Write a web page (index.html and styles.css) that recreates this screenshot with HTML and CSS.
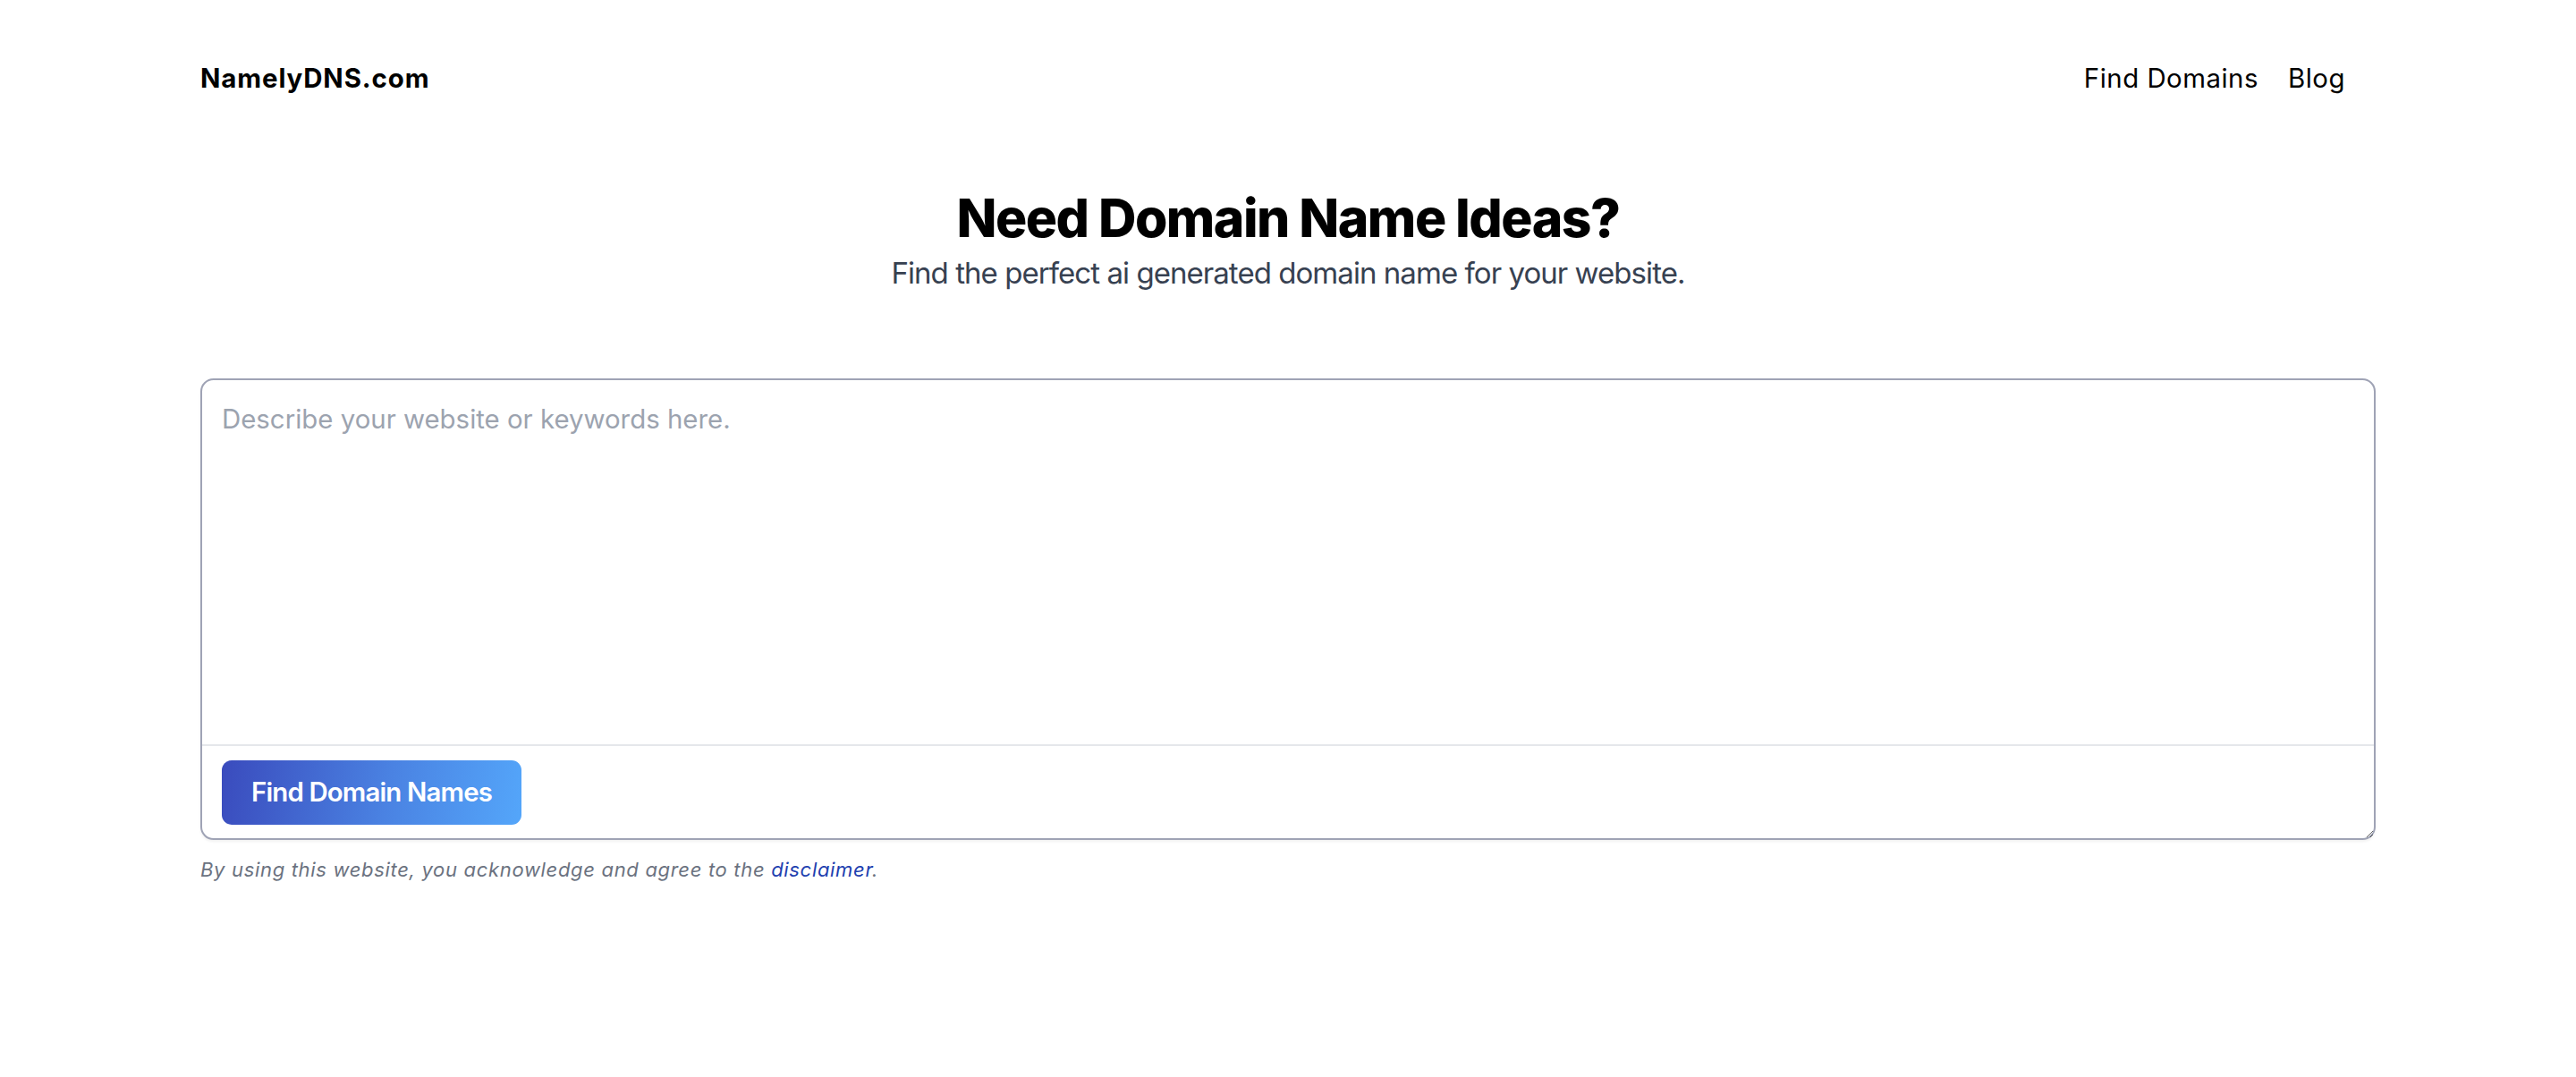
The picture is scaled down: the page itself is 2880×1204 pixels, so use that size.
FILE: index.html
```html
<!DOCTYPE html>
<html lang="en">
<head>
<meta charset="utf-8">
<title>NamelyDNS.com</title>
<link rel="stylesheet" href="styles.css">
</head>
<body>
<div class="page">
  <header class="header">
    <a class="logo" href="#">NamelyDNS.com</a>
    <nav class="nav">
      <a href="#">Find Domains</a>
      <a href="#">Blog</a>
    </nav>
  </header>
  <section class="hero">
    <h1 class="title">Need Domain Name Ideas?</h1>
    <p class="subtitle">Find the perfect ai generated domain name for your website.</p>
  </section>
  <form class="search">
    <div class="box">
      <textarea class="input" placeholder="Describe your website or keywords here."></textarea>
      <div class="box-footer">
        <button type="button" class="btn">Find Domain Names</button>
      </div>
    </div>
    <p class="disclaimer">By using this website, you acknowledge and agree to the <a href="#">disclaimer</a>.</p>
  </form>
</div>
</body>
</html>
```
FILE: styles.css
```css
* { box-sizing: border-box; }
html, body { margin: 0; padding: 0; background: #ffffff; }
body {
  font-family: Inter, "Noto Sans", sans-serif;
  color: #000;
  font-size: 29.4px;
  line-height: 44px;
}
a { color: inherit; text-decoration: none; }
.page { padding: 0 224px; }
.header {
  display: flex;
  justify-content: space-between;
  align-items: center;
  padding-top: 66px;
}
.logo { font-weight: 700; font-size: 29.4px; line-height: 44px; letter-spacing: 0.9px; }
.nav { display: flex; gap: 33px; margin-right: 34px; }
.nav a { font-size: 29.4px; line-height: 44px; font-weight: 400; letter-spacing: 0.5px; }
.hero { text-align: center; margin-top: 99px; }
.title {
  margin: 0;
  font-size: 58.8px;
  line-height: 70.6px;
  font-weight: 800;
  letter-spacing: -1.5px;
}
.subtitle {
  margin: 0;
  font-size: 33px;
  line-height: 51.4px;
  letter-spacing: -0.95px;
  color: #374151;
}
.search { margin-top: 92px; }
.box {
  border: 2px solid #9fa3b5;
  border-radius: 14.7px;
  overflow: hidden;
  resize: vertical;
  box-shadow: 0 2px 3px rgba(0,0,0,0.06);
  background: #fff;
}
.input {
  display: block;
  width: 100%;
  height: 407px;
  border: 0;
  outline: none;
  resize: none;
  padding: 22px;
  font-family: Inter, "Noto Sans", sans-serif;
  font-size: 29.4px;
  line-height: 44px;
  color: #111827;
  background: transparent;
}
.input::placeholder { color: #9ca3af; }
.box-footer {
  border-top: 2px solid #e5e7eb;
  padding: 16px 22px 15px;
}
.btn {
  display: block;
  border: 0;
  border-radius: 11px;
  padding: 14px 33px;
  height: 72px;
  font-family: Inter, "Noto Sans", sans-serif;
  font-size: 29.4px;
  line-height: 44px;
  font-weight: 600;
  letter-spacing: -0.85px;
  color: #ffffff;
  background: linear-gradient(100deg, #3a4bbd 0%, #4a82e2 55%, #54a6fa 100%);
  cursor: pointer;
}
.disclaimer {
  margin: 19px 0 0;
  font-size: 22px;
  line-height: 29.4px;
  font-style: italic;
  letter-spacing: 0.68px;
  color: #6b7280;
}
.disclaimer a { color: #1e40af; }
```
